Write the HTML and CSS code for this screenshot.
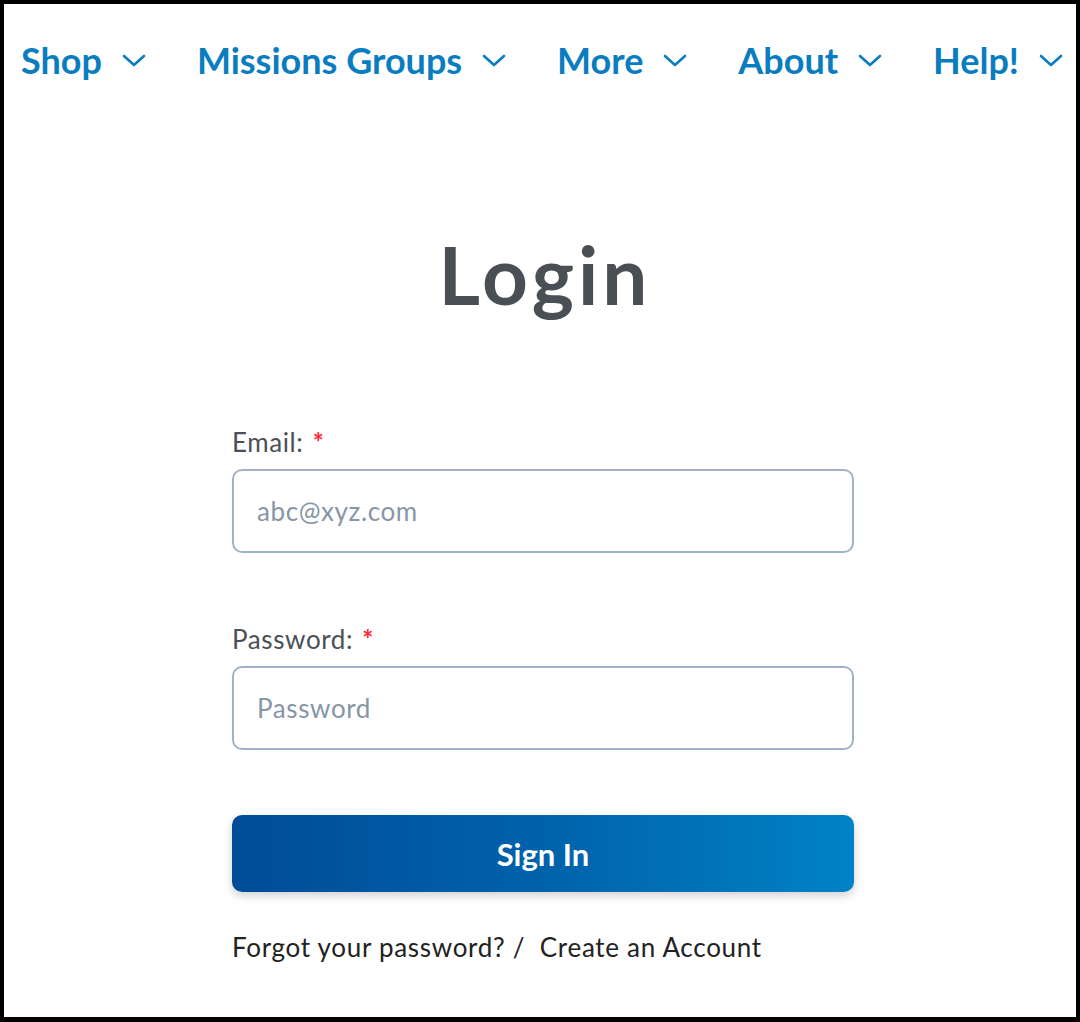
FILE: index.html
```html
<!DOCTYPE html>
<html lang="en">
<head>
    <meta charset="UTF-8">
    <meta name="viewport" content="width=device-width, initial-scale=1.0">
    <title>Login</title>
    <link rel="stylesheet" href="styles.css">
</head>
<body>
    <div class="frame">
        <nav class="nav">
            <a class="nav-item" href="#">Shop <svg class="chev" viewBox="0 0 24 13"><path d="M2 2 L12 11 L22 2"/></svg></a>
            <a class="nav-item" href="#">Missions Groups <svg class="chev" viewBox="0 0 24 13"><path d="M2 2 L12 11 L22 2"/></svg></a>
            <a class="nav-item" href="#">More <svg class="chev" viewBox="0 0 24 13"><path d="M2 2 L12 11 L22 2"/></svg></a>
            <a class="nav-item" href="#">About <svg class="chev" viewBox="0 0 24 13"><path d="M2 2 L12 11 L22 2"/></svg></a>
            <a class="nav-item" href="#">Help! <svg class="chev" viewBox="0 0 24 13"><path d="M2 2 L12 11 L22 2"/></svg></a>
        </nav>

        <main class="main">
            <h1 class="title">Login</h1>

            <form class="login-form">
                <label class="field-label" for="email">Email: <span class="req">*</span></label>
                <input class="field" type="email" id="email" placeholder="abc@xyz.com">

                <label class="field-label pw" for="password">Password: <span class="req">*</span></label>
                <input class="field" type="password" id="password" placeholder="Password">

                <button class="btn" type="button">Sign In</button>

                <p class="links"><a href="#">Forgot your password?</a> /&nbsp; <a href="#">Create an Account</a></p>
            </form>
        </main>
    </div>
</body>
</html>
```

FILE: styles.css
```css
* {
    box-sizing: border-box;
}

body {
    margin: 0;
    font-family: Lato, "Liberation Sans", sans-serif;
    background: #fff;
}

.frame {
    height: 1022px;
    border: 4px solid #000;
    border-bottom-width: 5px;
    overflow: hidden;
}

.nav {
    display: flex;
    justify-content: space-between;
    align-items: center;
    padding: 34px 13px 0 17px;
    height: 78px;
}

.nav-item {
    display: flex;
    align-items: center;
    gap: 20px;
    color: #0a7dc1;
    font-size: 36px;
    font-weight: 700;
    text-decoration: none;
    line-height: 44px;
}

.chev {
    width: 24px;
    height: 13px;
    fill: none;
    stroke: #0a7dc1;
    stroke-width: 2.6;
    stroke-linecap: round;
    stroke-linejoin: round;
}

.main {
    padding-left: 6px;
}

.title {
    margin: 142px 0 0;
    text-align: center;
    font-size: 80px;
    font-weight: 700;
    letter-spacing: 4px;
    text-indent: 4px;
    line-height: 100px;
    color: #4a4f55;
}

.login-form {
    width: 622px;
    margin: 102px auto 0;
    display: flex;
    flex-direction: column;
}

.field-label {
    font-size: 26px;
    letter-spacing: 0.6px;
    line-height: 32px;
    color: #4a5056;
    margin-bottom: 11px;
}

.field-label.pw {
    margin-top: 70px;
}

.req {
    color: #ff2a3a;
    font-weight: 700;
    margin-left: 2px;
}

.field {
    height: 84px;
    border: 2px solid #a2b2c4;
    border-radius: 10px;
    padding: 0 23px;
    font-family: inherit;
    font-size: 26px;
    letter-spacing: 0.6px;
    color: #333;
}

.field::placeholder {
    color: #8696a7;
}

.btn {
    margin-top: 65px;
    height: 77px;
    border: none;
    border-radius: 10px;
    background: linear-gradient(90deg, #004c97 0%, #0062ab 50%, #0082c6 100%);
    color: #fff;
    font-family: inherit;
    font-size: 31px;
    font-weight: 700;
    box-shadow: 0 4px 10px rgba(0, 0, 0, 0.18);
}

.links {
    margin: 39px 0 0;
    font-size: 26px;
    letter-spacing: 0.7px;
    color: #222;
}

.links a {
    color: #222;
    text-decoration: none;
}
```
